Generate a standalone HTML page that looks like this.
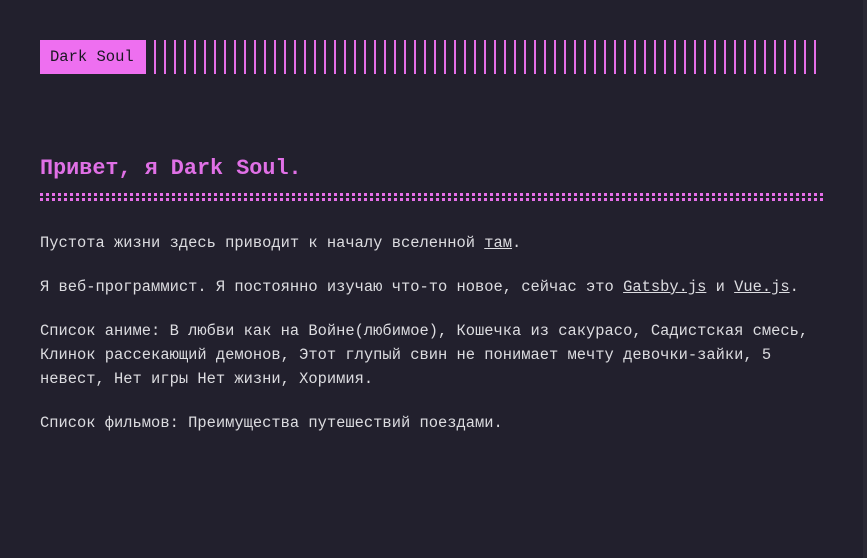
<!DOCTYPE html>
<html><head><meta charset="utf-8"><style>
html,body{margin:0;padding:0}
body{width:867px;height:558px;background:#22202d;overflow:hidden;position:relative;font-family:"Liberation Mono","DejaVu Sans Mono",monospace;color:#dcdce0}
.box{position:absolute;left:40px;top:40px;width:106px;height:34px;background:#ee6ff0;color:#1a1822;font-size:15.5px;line-height:34px;box-sizing:border-box;padding-left:10px}
.bars{position:absolute;left:154px;top:40px;width:663px;height:34px;background:repeating-linear-gradient(90deg,#e56ee8 0 2px,transparent 2px 10px)}
h1{position:absolute;left:40px;top:154px;margin:0;font-size:21.8px;font-weight:bold;color:#e070e6;line-height:30px}
.dots{position:absolute;left:40px;top:193px;width:784px;height:9px;background:
repeating-linear-gradient(90deg,#e56ee8 0 3px,transparent 3px 6px) 0 0/100% 3px no-repeat,
repeating-linear-gradient(90deg,#e56ee8 0 3px,transparent 3px 6px) 0 5px/100% 3px no-repeat}
.txt{position:absolute;left:40px;top:231px;width:790px;font-size:15.5px;line-height:24px;transform:scaleX(0.995);transform-origin:0 0}
p{margin:0 0 20px 0}
a{color:#dcdce0;text-decoration:underline}
.sb{position:absolute;right:0;top:0;width:4px;height:558px;background:#2a2834}
</style></head><body>
<div class="box">Dark Soul</div>
<div class="bars"></div>
<h1>Привет, я Dark Soul.</h1>
<div class="dots"></div>
<div class="txt">
<p>Пустота жизни здесь приводит к началу вселенной <a>там</a>.</p>
<p>Я веб-программист. Я постоянно изучаю что-то новое, сейчас это <a>Gatsby.js</a> и <a>Vue.js</a>.</p>
<p>Список аниме: В любви как на Войне(любимое), Кошечка из сакурасо, Садистская смесь, Клинок рассекающий демонов, Этот глупый свин не понимает мечту девочки-зайки, 5 невест, Нет игры Нет жизни, Хоримия.</p>
<p>Список фильмов: Преимущества путешествий поездами.</p>
</div>
<div class="sb"></div>
</body></html>
